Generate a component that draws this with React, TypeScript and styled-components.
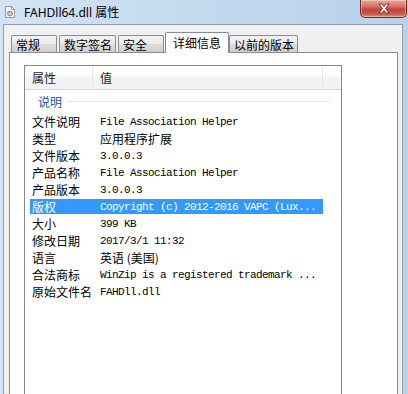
import React from "react";
import styled, { createGlobalStyle } from "styled-components";

const GlobalStyle = createGlobalStyle`
    html, body {
        margin: 0;
        padding: 0;
        overflow: hidden;
        background: #ffffff;
    }
`;

const CJK = `"Noto Sans CJK SC", "Noto Sans", sans-serif`;
const MONO = `"Liberation Mono", "Noto Sans CJK SC", monospace`;

// Outer Aero frame
const Window = styled.div`
    width: 408px;
    height: 394px;
    overflow: hidden;
    display: flex;
    flex-direction: column;
    background: linear-gradient(to right, #d4e4f4 0%, #c6dbf0 40%, #b9d1ea 100%);
`;

const TitleBar = styled.div`
    height: 24px;
    display: flex;
    align-items: center;
    padding-left: 5px;
    flex-shrink: 0;
`;

const Title = styled.span`
    margin-left: 9px;
    font-family: "Noto Sans", "Noto Sans CJK SC", sans-serif;
    font-size: 12px;
    color: #000;
`;

const CloseButton = styled.div`
    margin-left: auto;
    margin-right: 1px;
    align-self: flex-start;
    width: 47px;
    height: 18px;
    box-sizing: border-box;
    border: 1px solid #6d2a24;
    border-top: none;
    border-radius: 0 0 5px 5px;
    background: linear-gradient(
        to bottom,
        #e9a99d 0%,
        #d9786a 35%,
        #c2453a 55%,
        #c9574a 80%,
        #dc8a7c 100%
    );
    display: flex;
    align-items: center;
    justify-content: center;
    box-shadow: inset 0 0 0 1px rgba(255, 255, 255, 0.35);
`;

const Client = styled.div`
    flex: 1;
    margin: 0 5px 0 3px;
    border: 1px solid #8d9db2;
    border-bottom: none;
    background: #f0f0f0;
    padding: 7px 4px 0 5px;
    display: flex;
    flex-direction: column;
`;

const TabStrip = styled.div`
    display: flex;
    align-items: flex-end;
    height: 21px;
    padding-left: 2px;
    margin-bottom: -1px;
    position: relative;
    z-index: 1;
`;

const Tab = styled.div<{ $active?: boolean }>`
    box-sizing: border-box;
    display: flex;
    align-items: center;
    font-family: ${CJK};
    font-size: 12px;
    color: #000;
    border: 1px solid #898c95;
    border-bottom: none;
    border-radius: 2px 2px 0 0;
    height: ${(p) => (p.$active ? "21px" : "17px")};
    min-width: ${(p) => (p.$active ? "auto" : "46px")};
    padding: ${(p) => (p.$active ? "0 7px 2px 7px" : "0 3px 0 4px")};
    margin: ${(p) => (p.$active ? "0 0 0 -1px" : "0 2px 1px 0")};
    background: ${(p) =>
        p.$active
            ? "#ffffff"
            : "linear-gradient(to bottom, #f2f2f2 0%, #ebebeb 50%, #dddddd 51%, #cfcfcf 100%)"};
`;

const Panel = styled.div`
    flex: 1;
    background: #ffffff;
    border: 1px solid #898c95;
    border-bottom: none;
    padding: 12px 0 0 14px;
`;

const ListView = styled.div`
    width: 318px;
    height: 400px;
    box-sizing: border-box;
    border: 1px solid #828790;
    background: #ffffff;
`;

const Header = styled.div`
    display: flex;
    height: 24px;
    box-sizing: border-box;
    border-bottom: 1px solid #d5d5d5;
    background: linear-gradient(
        to bottom,
        #ffffff 0%,
        #ffffff 40%,
        #f3f4f6 50%,
        #f1f2f4 100%
    );
`;

const HeaderCell = styled.div<{ $width: number }>`
    width: ${(p) => p.$width}px;
    box-sizing: border-box;
    padding-left: 7px;
    border-right: 1px solid #e3e8ee;
    display: flex;
    align-items: center;
    font-family: ${CJK};
    font-size: 12px;
    color: #1e1e1e;
`;

const Body = styled.div`
    padding-left: 5px;
`;

const GroupRow = styled.div`
    width: 300px;
    height: 18px;
    margin: 2px 0 3px;
    display: flex;
    align-items: center;
    padding-left: 8px;
    box-sizing: border-box;
`;

const GroupLabel = styled.span`
    font-family: ${CJK};
    font-size: 12px;
    color: #2452a4;
`;

const GroupLine = styled.div`
    flex: 1;
    height: 1px;
    margin-left: 6px;
    background: #e2e6eb;
`;

const Row = styled.div`
    width: 293px;
    height: 17px;
    padding: 1px 0;
    box-sizing: border-box;
`;

const RowFill = styled.div<{ $selected?: boolean }>`
    height: 15px;
    display: flex;
    align-items: center;
    background: ${(p) => (p.$selected ? "#3399ff" : "transparent")};
    color: ${(p) => (p.$selected ? "#ffffff" : "#000000")};
`;

const KeyCell = styled.div`
    width: 62px;
    flex-shrink: 0;
    padding-left: 2px;
    box-sizing: border-box;
    white-space: nowrap;
    font-family: ${CJK};
    font-size: 12px;
`;

const ValueCell = styled.div<{ $mono?: boolean }>`
    padding-left: 8px;
    white-space: nowrap;
    font-family: ${(p) => (p.$mono ? MONO : CJK)};
    font-size: ${(p) => (p.$mono ? "11px" : "12px")};
    letter-spacing: ${(p) => (p.$mono ? "-0.6px" : "0")};
`;

const FileIcon = () => (
    <svg width="10" height="12" viewBox="0 0 10 12">
        <path d="M0.5 0.5 H6.5 L9.5 3.5 V11.5 H0.5 Z" fill="#f4f4f4" stroke="#9a9a9a" />
        <path d="M6.5 0.5 V3.5 H9.5" fill="none" stroke="#9a9a9a" />
        <circle cx="5" cy="7.5" r="2.2" fill="none" stroke="#8a8a8a" strokeWidth="1.2" />
        <circle cx="5" cy="7.5" r="0.7" fill="#8a8a8a" />
    </svg>
);

const CloseGlyph = () => (
    <svg width="14" height="11" viewBox="0 0 14 11">
        <path
            d="M2 1 H5 L7 3.5 L9 1 H12 L8.6 5.5 L12 10 H9 L7 7.5 L5 10 H2 L5.4 5.5 Z"
            fill="#ffffff"
            stroke="#5a1c16"
            strokeWidth="0.8"
            strokeLinejoin="round"
        />
    </svg>
);

type Prop = { key: string; value: string; mono?: boolean; selected?: boolean };

const props: Prop[] = [
    { key: "文件说明", value: "File Association Helper", mono: true },
    { key: "类型", value: "应用程序扩展" },
    { key: "文件版本", value: "3.0.0.3", mono: true },
    { key: "产品名称", value: "File Association Helper", mono: true },
    { key: "产品版本", value: "3.0.0.3", mono: true },
    { key: "版权", value: "Copyright (c) 2012-2016 VAPC (Lux...", mono: true, selected: true },
    { key: "大小", value: "399 KB", mono: true },
    { key: "修改日期", value: "2017/3/1 11:32", mono: true },
    { key: "语言", value: "英语 (美国)" },
    { key: "合法商标", value: "WinZip is a registered trademark ...", mono: true },
    { key: "原始文件名", value: "FAHDll.dll", mono: true },
];

const tabs = ["常规", "数字签名", "安全", "详细信息", "以前的版本"];

const App: React.FC = () => {
    return (
        <>
            <GlobalStyle />
            <Window>
                <TitleBar>
                    <FileIcon />
                    <Title>FAHDll64.dll 属性</Title>
                    <CloseButton>
                        <CloseGlyph />
                    </CloseButton>
                </TitleBar>
                <Client>
                    <TabStrip>
                        {tabs.map((t) => (
                            <Tab key={t} $active={t === "详细信息"}>
                                {t}
                            </Tab>
                        ))}
                    </TabStrip>
                    <Panel>
                        <ListView>
                            <Header>
                                <HeaderCell $width={68}>属性</HeaderCell>
                                <HeaderCell $width={230}>值</HeaderCell>
                            </Header>
                            <Body>
                                <GroupRow>
                                    <GroupLabel>说明</GroupLabel>
                                    <GroupLine />
                                </GroupRow>
                                {props.map((p) => (
                                    <Row key={p.key}>
                                        <RowFill $selected={p.selected}>
                                            <KeyCell>{p.key}</KeyCell>
                                            <ValueCell $mono={p.mono}>{p.value}</ValueCell>
                                        </RowFill>
                                    </Row>
                                ))}
                            </Body>
                        </ListView>
                    </Panel>
                </Client>
            </Window>
        </>
    );
};

export default App;
